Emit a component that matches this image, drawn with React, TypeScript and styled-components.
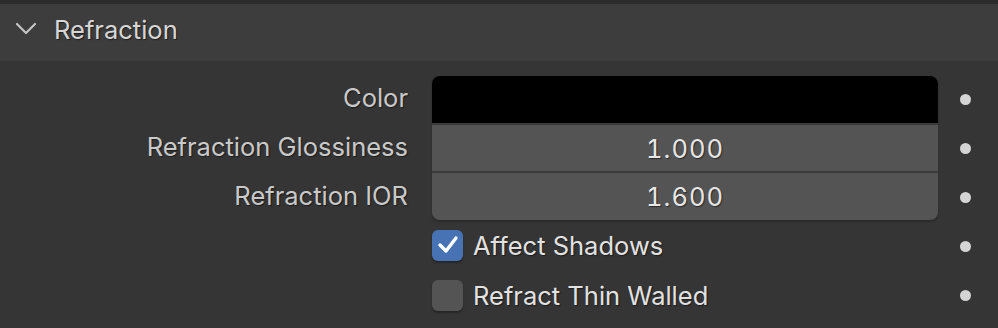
import React from "react";
import styled, { createGlobalStyle } from "styled-components";

const Global = createGlobalStyle`
  html, body { margin: 0; padding: 0; background: #353535; }
  body { font-family: Inter, "Noto Sans", sans-serif; width: 998px; height: 328px; overflow: hidden; }
`;

const Page = styled.div`
  width: 998px;
  height: 328px;
  background: #353535;
  display: flex;
  flex-direction: column;
`;

const TopStrip = styled.div`
  height: 4px;
  background: #2c2c2c;
`;

const Header = styled.div`
  height: 57px;
  background: #3d3d3d;
  display: flex;
  align-items: center;
  gap: 17px;
  padding: 0 0 7px 15px;
  box-sizing: border-box;
`;

const HeaderTitle = styled.span`
  font-size: 25.5px;
  color: #d6d6d6;
  text-shadow: 1px 1px 1px #1e1e1e;
`;

const Body = styled.div`
  display: grid;
  grid-template-columns: 408px 24px 506px 60px;
  padding-top: 12px;
`;

const Labels = styled.div`
  grid-column: 1;
  display: flex;
  flex-direction: column;
`;

const Label = styled.div`
  height: 49px;
  display: flex;
  align-items: center;
  justify-content: flex-end;
  font-size: 25.5px;
  color: #c9c9c9;
  text-shadow: 1px 1px 1px #1c1c1c;
`;

const Fields = styled.div`
  grid-column: 3;
  display: flex;
  flex-direction: column;
  border-radius: 8px;
  overflow: hidden;
  background: #3a3a3a;
  gap: 2px;
  box-shadow: 0 2px 2px #2a2a2a;
  height: 144px;
  margin-top: 3px;
`;

const Field = styled.div<{ $swatch?: string }>`
  flex: 1;
  background: ${(p) => p.$swatch ?? "#545454"};
  display: flex;
  align-items: center;
  justify-content: center;
  font-size: 25.5px;
  font-variant-numeric: tabular-nums;
  color: #e6e6e6;
  text-shadow: 1px 1px 1px #2a2a2a;
  letter-spacing: 1px;
`;

const Dots = styled.div`
  grid-column: 4;
  grid-row: 1 / span 2;
  display: flex;
  flex-direction: column;
  padding-top: 2px;
`;

const DotCell = styled.div`
  height: 49px;
  display: flex;
  align-items: center;
  padding-left: 22px;
`;

const Dot = styled.span`
  width: 11px;
  height: 11px;
  border-radius: 50%;
  background: #d4d4d4;
`;

const Checks = styled.div`
  grid-column: 3;
  display: flex;
  flex-direction: column;
  margin-top: 0px;
`;

const CheckRow = styled.div`
  height: 50px;
  display: flex;
  align-items: center;
  gap: 10px;
`;

const Box = styled.span<{ $on?: boolean }>`
  width: 31px;
  height: 31px;
  border-radius: 6px;
  background: ${(p) => (p.$on ? "#4772b3" : "#545454")};
  box-shadow: 0 2px 2px #262626;
  display: flex;
  align-items: center;
  justify-content: center;
`;

const CheckText = styled.span`
  font-size: 25.5px;
  color: #e2e2e2;
  text-shadow: 1px 1px 1px #1c1c1c;
`;

const Spacer = styled.div`
  grid-column: 1 / span 2;
`;

export default function App() {
  return (
    <Page>
      <Global />
      <TopStrip />
      <Header>
        <svg width="22" height="14" viewBox="0 0 22 14">
          <polyline points="2,2 11,11 20,2" fill="none" stroke="#c4c4c4" strokeWidth="2.2" strokeLinecap="round" strokeLinejoin="round" />
        </svg>
        <HeaderTitle>Refraction</HeaderTitle>
      </Header>
      <Body>
        <Labels>
          <Label>Color</Label>
          <Label>Refraction Glossiness</Label>
          <Label>Refraction IOR</Label>
        </Labels>
        <Fields>
          <Field $swatch="#000000" />
          <Field>1.000</Field>
          <Field>1.600</Field>
        </Fields>
        <Dots>
          <DotCell><Dot /></DotCell>
          <DotCell><Dot /></DotCell>
          <DotCell><Dot /></DotCell>
          <DotCell><Dot /></DotCell>
          <DotCell><Dot /></DotCell>
        </Dots>
        <Spacer />
        <Checks>
          <CheckRow>
            <Box $on>
              <svg width="22" height="20" viewBox="0 0 22 20">
                <polyline points="3,10 9,16 19,3" fill="none" stroke="#ffffff" strokeWidth="3.4" strokeLinecap="round" strokeLinejoin="round" />
              </svg>
            </Box>
            <CheckText>Affect Shadows</CheckText>
          </CheckRow>
          <CheckRow>
            <Box />
            <CheckText>Refract Thin Walled</CheckText>
          </CheckRow>
        </Checks>
      </Body>
    </Page>
  );
}
